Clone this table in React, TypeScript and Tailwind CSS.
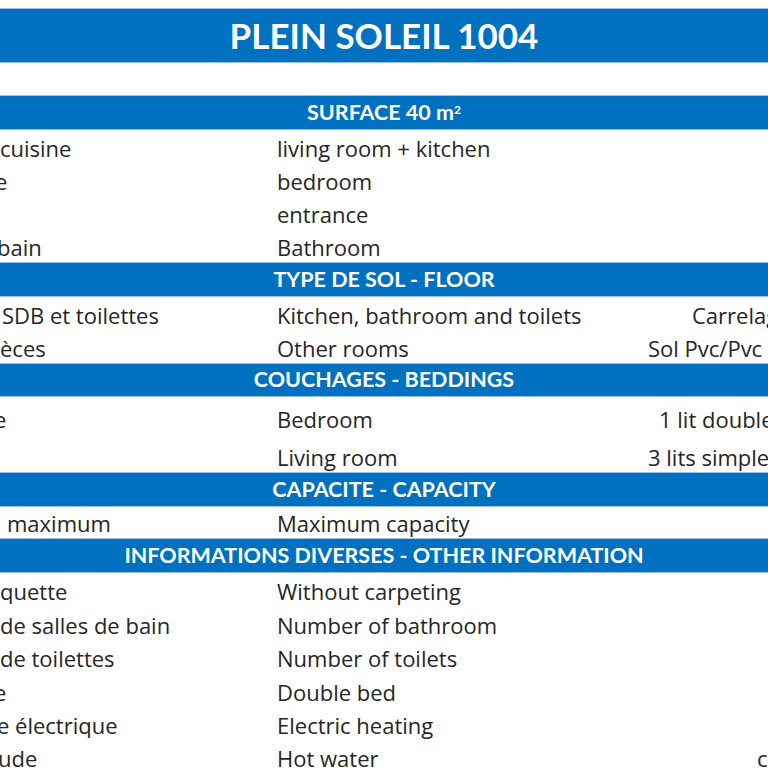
import type { ReactNode } from 'react';

type Row = {
  a: string;
  aCls: string;
  b: string;
  c?: string;
  cCls?: string;
  h: string;
};

type Section = {
  title: ReactNode;
  band: string;
  rows: Row[];
};

const sections: Section[] = [
  {
    title: (
      <>
        SURFACE 40 m<sup className="text-[12px] relative -top-[3px]">2</sup>
      </>
    ),
    band: 'h-[35px]',
    rows: [
      { a: 'cuisine', aCls: 'ml-0', b: 'living room + kitchen', h: 'h-[33px]' },
      { a: 'e', aCls: '-ml-[5px]', b: 'bedroom', h: 'h-[33px]' },
      { a: '', aCls: 'ml-0', b: 'entrance', h: 'h-[33px]' },
      { a: 'bain', aCls: '-ml-[3px]', b: 'Bathroom', h: 'h-[33px]' },
    ],
  },
  {
    title: 'TYPE DE SOL - FLOOR',
    band: 'h-[35px]',
    rows: [
      { a: 'SDB et toilettes', aCls: 'ml-[2px]', b: 'Kitchen, bathroom and toilets', c: 'Carrelage', cCls: 'pl-[92px]', h: 'h-[33px]' },
      { a: 'èces', aCls: 'ml-0', b: 'Other rooms', c: 'Sol Pvc/Pvc', cCls: 'pl-[48px]', h: 'h-[33px]' },
    ],
  },
  {
    title: 'COUCHAGES - BEDDINGS',
    band: 'h-[34px]',
    rows: [
      { a: 'e', aCls: '-ml-[6px]', b: 'Bedroom', c: '1 lit double', cCls: 'pl-[59px]', h: 'h-[37px]' },
      { a: '', aCls: 'ml-0', b: 'Living room', c: '3 lits simples', cCls: 'pl-[48px]', h: 'h-[38px]' },
    ],
  },
  {
    title: 'CAPACITE - CAPACITY',
    band: 'h-[35px]',
    rows: [{ a: 'maximum', aCls: 'ml-[7px]', b: 'Maximum capacity', h: 'h-[31px]' }],
  },
  {
    title: 'INFORMATIONS DIVERSES - OTHER INFORMATION',
    band: 'h-[35px]',
    rows: [
      { a: 'quette', aCls: 'ml-0', b: 'Without carpeting', h: 'h-[33.4px]' },
      { a: 'de salles de bain', aCls: 'ml-0', b: 'Number of bathroom', h: 'h-[33.4px]' },
      { a: 'de toilettes', aCls: 'ml-0', b: 'Number of toilets', h: 'h-[33.4px]' },
      { a: 'e', aCls: '-ml-[6px]', b: 'Double bed', h: 'h-[33.4px]' },
      { a: 'e électrique', aCls: '-ml-[3px]', b: 'Electric heating', h: 'h-[33.4px]' },
      { a: 'ude', aCls: '-ml-[2px]', b: 'Hot water', c: 'collectif', cCls: 'pl-[157px]', h: 'h-[33.4px]' },
    ],
  },
];

function Band({ children, cls }: { children: ReactNode; cls: string }) {
  return (
    <div
      className={`${cls} flex items-center justify-center bg-[#0070c0] border-y border-[#9dc3e6] text-white font-bold text-[21.5px] leading-none whitespace-nowrap font-['Lato','Liberation_Sans',sans-serif]`}
    >
      {children}
    </div>
  );
}

export default function App() {
  return (
    <div className="w-[768px] h-[768px] overflow-hidden bg-white text-[#262626] font-['Open_Sans','Liberation_Sans',sans-serif]">
      <div className="h-[8px]" />
      <div className="h-[55px] flex items-center justify-center bg-[#0070c0] border-y border-[#9dc3e6] text-white font-bold text-[35px] leading-none font-['Lato','Liberation_Sans',sans-serif]">
        PLEIN SOLEIL 1004
      </div>
      <div className="h-[32px]" />

      {sections.map((s, i) => (
        <div key={i}>
          <Band cls={s.band}>{s.title}</Band>
          {s.rows.map((r, j) => (
            <div key={j} className={`${r.h} flex items-end pb-[2px] text-[22px] leading-[26px] whitespace-nowrap`}>
              <div className="w-[277px] shrink-0 overflow-hidden">
                <span className={`block ${r.aCls}`}>{r.a || '\u00a0'}</span>
              </div>
              <div className="w-[323px] shrink-0">{r.b}</div>
              <div className={`shrink-0 ${r.cCls ?? ''}`}>{r.c ?? ''}</div>
            </div>
          ))}
        </div>
      ))}
    </div>
  );
}
